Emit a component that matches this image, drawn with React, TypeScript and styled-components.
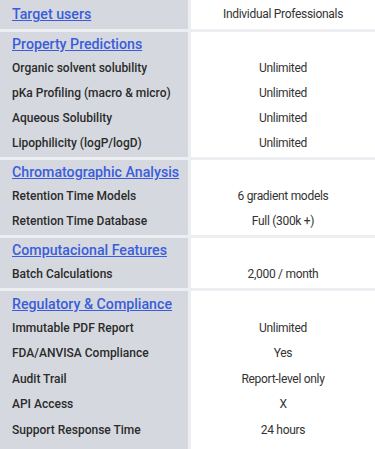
import React from 'react';
import styled, { createGlobalStyle } from 'styled-components';

const GlobalStyle = createGlobalStyle`
  body {
    margin: 0;
    background: #ffffff;
    font-family: 'Roboto', 'Noto Sans', sans-serif;
  }
`;

const Table = styled.div`
  display: grid;
  grid-template-columns: 188px 1fr;
  gap: 3px;
  background: #eceef2;
  width: 375px;
`;

const LeftCell = styled.div<{ $single?: boolean; $last?: boolean }>`
  background: #d5d9df;
  padding: ${(p) => (p.$single ? '3px 12px' : '1px 12px')};
  padding-top: ${(p) => (p.$last ? '2px' : undefined)};
  padding-bottom: ${(p) => (p.$last ? '12px' : undefined)};
`;

const RightCell = styled.div<{ $single?: boolean; $last?: boolean }>`
  background: #ffffff;
  padding: ${(p) => (p.$single ? '3px 8px' : '1px 8px')};
  padding-top: ${(p) => (p.$last ? '2px' : undefined)};
  padding-bottom: ${(p) => (p.$last ? '12px' : undefined)};
  text-align: center;
`;

const Header = styled.a`
  display: block;
  height: 23px;
  line-height: 23px;
  font-size: 14.2px;
  font-weight: 500;
  color: #3b5ddb;
  text-decoration: underline;
  white-space: nowrap;
  cursor: pointer;
`;

const Label = styled.div<{ $gap?: number }>`
  height: ${(p) => p.$gap ?? 25}px;
  line-height: ${(p) => p.$gap ?? 25}px;
  font-size: 12px;
  font-weight: 500;
  color: #2b2b2b;
  white-space: nowrap;
`;

const Value = styled.div<{ $gap?: number }>`
  height: ${(p) => p.$gap ?? 25}px;
  line-height: ${(p) => p.$gap ?? 25}px;
  font-size: 12px;
  letter-spacing: -0.3px;
  color: #333333;
  white-space: nowrap;
`;

const Spacer = styled.div`
  height: 23px;
`;

type Section = {
  title: string;
  gap?: number;
  rows: [string, string][];
};

const sections: Section[] = [
  {
    title: 'Property Predictions',
    rows: [
      ['Organic solvent solubility', 'Unlimited'],
      ['pKa Profiling (macro & micro)', 'Unlimited'],
      ['Aqueous Solubility', 'Unlimited'],
      ['Lipophilicity (logP/logD)', 'Unlimited'],
    ],
  },
  {
    title: 'Chromatographic Analysis',
    rows: [
      ['Retention Time Models', '6 gradient models'],
      ['Retention Time Database', 'Full (300k +)'],
    ],
  },
  {
    title: 'Computacional Features',
    rows: [['Batch Calculations', '2,000 / month']],
  },
  {
    title: 'Regulatory & Compliance',
    gap: 25.4,
    rows: [
      ['Immutable PDF Report', 'Unlimited'],
      ['FDA/ANVISA Compliance', 'Yes'],
      ['Audit Trail', 'Report-level only'],
      ['API Access', 'X'],
      ['Support Response Time', '24 hours'],
    ],
  },
];

const App = () => {
  return (
    <>
      <GlobalStyle />
      <Table>
        <LeftCell $single>
          <Header>Target users</Header>
        </LeftCell>
        <RightCell $single>
          <Value $gap={23}>Individual Professionals</Value>
        </RightCell>
        {sections.map((section, i) => {
          const last = i === sections.length - 1;
          return (
            <React.Fragment key={section.title}>
              <LeftCell $last={last}>
                <Header>{section.title}</Header>
                {section.rows.map(([label]) => (
                  <Label key={label} $gap={section.gap}>
                    {label}
                  </Label>
                ))}
              </LeftCell>
              <RightCell $last={last}>
                <Spacer />
                {section.rows.map(([label, value]) => (
                  <Value key={label} $gap={section.gap}>
                    {value}
                  </Value>
                ))}
              </RightCell>
            </React.Fragment>
          );
        })}
      </Table>
    </>
  );
};

export default App;
